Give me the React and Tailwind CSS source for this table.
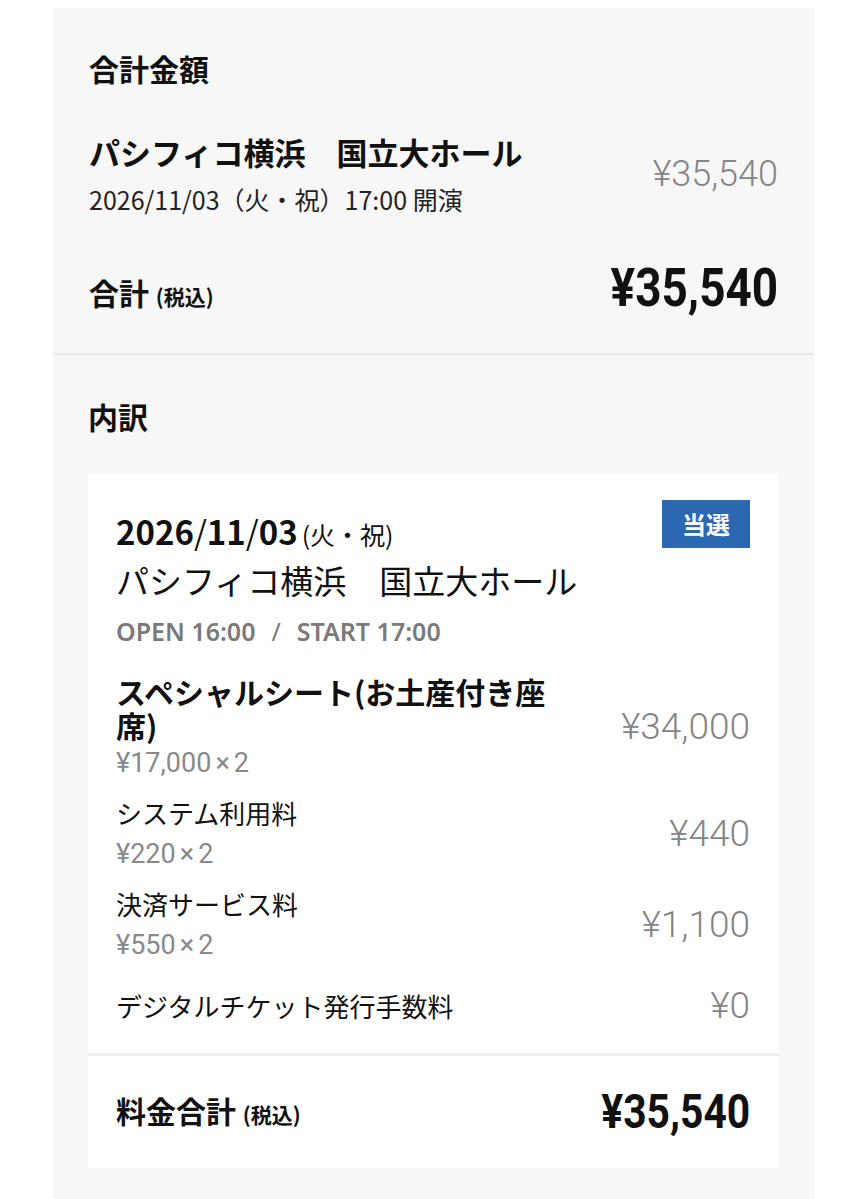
import React from "react";

const jp = { fontFamily: '"Noto Sans CJK JP", "Noto Sans", sans-serif' };
const din = { fontFamily: 'Roboto, "Liberation Sans", sans-serif' };

const items = [
  { name: "スペシャルシート(お土産付き座席)", bold: true, unit: "¥17,000", qty: "2", price: "¥34,000" },
  { name: "システム利用料", unit: "¥220", qty: "2", price: "¥440" },
  { name: "決済サービス料", unit: "¥550", qty: "2", price: "¥1,100" },
  { name: "デジタルチケット発行手数料", price: "¥0" },
];

const Price = ({ children, className }) => (
  <span className={"inline-block leading-none whitespace-nowrap " + className} style={din}>
    {children}
  </span>
);

const App = () => {
  return (
    <div className="min-h-screen bg-white pt-2 px-[53px]" style={jp}>
      <div className="bg-[#f7f7f7]">
        {/* 合計金額 */}
        <section className="px-9 pt-[40px] pb-[38px]">
          <h2 className="text-[30px] font-bold text-[#111] leading-[40px]">合計金額</h2>

          <div className="mt-[44px] flex items-center justify-between">
            <div>
              <p className="text-[31px] font-bold text-[#111] leading-[40px]">パシフィコ横浜　国立大ホール</p>
              <p className="mt-[10px] text-[25px] text-[#222] leading-[34px]">2026/11/03（火・祝）17:00 開演</p>
            </div>
            <Price className="text-[36px] font-light text-[#858585]">¥35,540</Price>
          </div>

          <div className="mt-[45px] flex items-center justify-between">
            <p className="pt-[12px] text-[30px] font-bold text-[#111] leading-[30px]">
              合計 <span className="text-[21px]">(税込)</span>
            </p>
            <Price className="text-[54px] font-bold text-[#111] scale-x-[0.85] origin-right">¥35,540</Price>
          </div>
        </section>

        <div className="h-[2px] bg-[#e8e8e8]" />

        {/* 内訳 */}
        <section className="px-[35px] pt-[41px] pb-[31px]">
          <h2 className="text-[30px] font-bold text-[#111] leading-[40px]">内訳</h2>

          <div className="mt-[38px] bg-white">
            <div className="pl-7 pr-[29px] pt-[26px] pb-[29px]">
              <div className="flex items-start justify-between">
                <div className="mt-[11px]">
                  <p className="text-[#111] leading-[40px]">
                    <span className="text-[33px] font-bold">
                      2026<span className="font-normal">/</span>11<span className="font-normal">/</span>03
                    </span>
                    <span className="ml-1 text-[25px]">(火・祝)</span>
                  </p>
                  <p className="mt-0 text-[33px] text-[#111] leading-[44px]">パシフィコ横浜　国立大ホール</p>
                  <p
                    className="mt-[14px] text-[25px] font-semibold text-[#7a7a7a] leading-[30px]"
                    style={{ fontFamily: '"Noto Sans", "Open Sans", sans-serif' }}
                  >
                    OPEN 16:00<span className="mx-[16px] font-normal">/</span>START 17:00
                  </p>
                </div>
                <span className="w-[88px] h-[48px] flex items-center justify-center bg-[#2c67b1] text-white font-bold text-[24px] leading-none">
                  当選
                </span>
              </div>

              <div className="mt-[28px]">
                {items.map((it, i) => (
                  <div
                    key={it.name}
                    className={
                      "flex items-center justify-between " +
                      (i === 0 ? "" : i === 3 ? "mt-[26px]" : "mt-[17px]")
                    }
                  >
                    <div className="max-w-[450px]">
                      <p
                        className={
                          "text-[#111] leading-[34px] " + (it.bold ? "text-[30px] font-bold" : "text-[26px]")
                        }
                      >
                        {it.name}
                      </p>
                      {it.unit && (
                        <p className={"text-[27px] text-[#8a8a8a] leading-[32px] " + (it.bold ? "mt-[5px]" : "mt-[8px]")} style={din}>
                          {it.unit}
                          <span className="mx-[4px]">×</span>
                          {it.qty}
                        </p>
                      )}
                    </div>
                    <Price className="text-[37px] font-light text-[#858585]">{it.price}</Price>
                  </div>
                ))}
              </div>
            </div>

            <div className="h-[3px] bg-[#f0f0f0]" />

            <div className="pl-7 pr-[29px] pt-[32px] pb-[32px] flex items-center justify-between">
              <p className="text-[30px] font-bold text-[#111] leading-[30px]">
                料金合計 <span className="text-[21px]">(税込)</span>
              </p>
              <Price className="text-[48px] font-bold text-[#111] scale-x-[0.85] origin-right">¥35,540</Price>
            </div>
          </div>
        </section>
      </div>
    </div>
  );
};

export default App;
